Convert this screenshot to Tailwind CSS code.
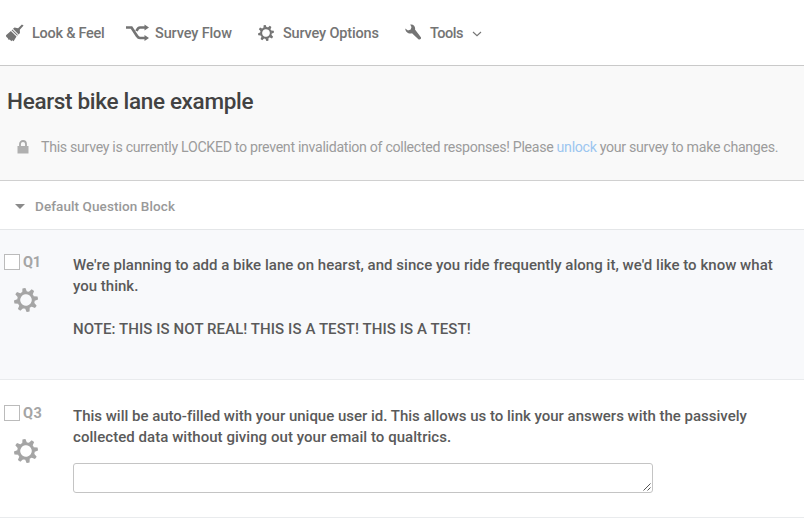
<!DOCTYPE html>
<html lang="en">
<head>
<meta charset="utf-8">
<title>Survey editor</title>
<script src="https://cdn.jsdelivr.net/npm/@tailwindcss/browser@4"></script>
</head>
<body class="w-[804px] h-[520px] overflow-hidden bg-white font-['Roboto','Liberation_Sans',sans-serif] whitespace-nowrap">
<svg class="hidden">
  <symbol id="gear" viewBox="-12 -12 24 24">
    <g transform="rotate(-10)">
      <circle r="7.300" fill="none" stroke="currentColor" stroke-width="3"/>
      <g fill="currentColor">
        <path id="pair" d="M-2.400-8L-1.500-12H1.500L2.400-8zM-2.400 8L-1.500 12H1.500L2.400 8z"/>
        <use href="#pair" transform="rotate(45)"/><use href="#pair" transform="rotate(90)"/><use href="#pair" transform="rotate(135)"/>
      </g>
    </g>
  </symbol>
</svg>
<nav class="flex h-[66px] items-center border-b border-[#c9c9c9] pl-[6px] text-[14.5px] font-medium text-[#747474]">
  <div class="flex w-[120px] items-center">
    <svg class="mr-[8px] h-[18px] w-[18px]" viewBox="0 0 18 18" fill="currentColor"><path d="M15.900.4l1.700 1.100-3.800 4.300.2 3.200-1.400 1.400L7 4.800l1.500-1.200 3.600.7z"/><path d="M6.300 5.500l5.600 5.600-.7.700-5.600-5.600z"/><path d="M4.900 6.900l5.600 5.600-2.900 4.700-1.400-.9-.8.900-1.700-1.700-.9.500-1.200-2L.2 12.800 0 11.300z"/></svg>
    <span class="pt-[2px] tracking-[-0.26px]">Look &amp; Feel</span>
  </div>
  <div class="flex w-[132px] items-center">
    <svg class="mr-[6px] h-[18px] w-[23px]" viewBox="0 0 23 18"><path d="M0 3.500H5.500L11 12Q12.300 14 14 14H19M10.500 7Q12 3.500 14 3.500H19" fill="none" stroke="currentColor" stroke-width="2.700"/><path d="M18.500.5l4.500 3-4.500 3zM18.500 11l4.500 3-4.500 3z" fill="currentColor"/></svg>
    <span class="pt-[2px] tracking-[-0.13px]">Survey Flow</span>
  </div>
  <div class="flex w-[146px] items-center">
    <svg class="mr-[9px] h-[16px] w-[16px]"><use href="#gear"/></svg>
    <span class="pt-[2px] tracking-[-0.16px]">Survey Options</span>
  </div>
  <div class="flex items-center">
    <svg class="mr-[9px] ml-px h-[17px] w-[16px]" viewBox="0 0 16 17" fill="currentColor"><path d="M5.200.6C8.300-.2 10.700 2.400 10 5.600l5.700 7.300c.5.700.4 1.600-.1 2.200-.6.600-1.600.7-2.200.1L7 9.300C3.500 10.300.2 7.700.3 4.600L3 6.400 5.700 5.600 6.500 3.100z"/></svg>
    <span class="pt-[2px] tracking-[-0.5px]">Tools</span>
    <svg class="ml-[9px] mt-[3px] h-[6px] w-[10px]" viewBox="0 0 10 6"><path d="M1 1l4 3.700L9 1" fill="none" stroke="currentColor" stroke-width="1.100"/></svg>
  </div>
</nav>
<header class="h-[115px] border-b border-[#d0d0d0] bg-[#f9f9f9] pt-[20px]">
  <h1 class="pl-[7px] text-[22.5px] font-medium leading-[30px] tracking-[-0.32px] text-[#424242]">Hearst bike lane example</h1>
  <div class="mt-[22px] flex h-[20px] items-center pl-[17px] text-[14.2px] tracking-[-0.31px] text-[#9c9c9c]">
    <svg class="mr-[12px] mb-[2px] h-[14px] w-[12px] shrink-0" viewBox="0 0 12 14"><path d="M3 7V4a3 3 0 0 1 6 0V7" fill="none" stroke="#a8a8a8" stroke-width="1.800"/><path d="M.5 6h11v7.500H.5z" fill="#b0b0b0"/></svg>
    <p>This survey is currently LOCKED to prevent invalidation of collected responses! Please <a class="text-[#9cc6f0]">unlock</a> your survey to make changes.</p>
  </div>
</header>
<div class="flex h-[49px] items-center border-b border-[#e4e6e8] pl-[15px] pt-[2px] text-[13.5px] font-medium tracking-[0.09px] text-[#999]">
  <svg class="mr-[10px] h-[5px] w-[10px]" viewBox="0 0 10 5"><path d="M0 0H10L5 5z" fill="#8b8b8b"/></svg>
  <span>Default Question Block</span>
</div>
<section class="flex h-[150px] border-b border-[#e9ebed] bg-[#f8f9fb] pt-[24px]">
  <div class="w-[73px] pl-[4px]">
    <div class="flex h-[16px] items-center text-[14.5px] font-bold text-[#a5a5a5]"><span class="mr-[3px] h-[16px] w-[16px] border border-[#bbb] bg-white"></span><span class="pt-px tracking-[-0.3px]">Q1</span></div>
    <svg class="ml-[10px] mt-[18px] h-[24px] w-[24px] text-[#a5a5a5]"><use href="#gear"/></svg>
  </div>
  <div class="pt-px text-[15px] font-medium leading-[21px] text-[#5a5a5a]">
    <p class="tracking-[0.03px]">We're planning to add a bike lane on hearst, and since you ride frequently along it, we'd like to know what</p>
    <p>you think.</p>
    <p class="mt-[22px] tracking-[0.08px]">NOTE: THIS IS NOT REAL! THIS IS A TEST! THIS IS A TEST!</p>
  </div>
</section>
<section class="flex h-[138px] border-b border-[#e9ebed] bg-white pt-[25px]">
  <div class="w-[73px] pl-[4px]">
    <div class="flex h-[16px] items-center text-[14.5px] font-bold text-[#a5a5a5]"><span class="mr-[3px] h-[16px] w-[16px] border border-[#bbb] bg-white"></span><span class="pt-px tracking-[0.6px]">Q3</span></div>
    <svg class="ml-[10px] mt-[18px] h-[24px] w-[24px] text-[#a5a5a5]"><use href="#gear"/></svg>
  </div>
  <div class="pt-px text-[15px] font-medium leading-[21px] text-[#5a5a5a]">
    <p class="tracking-[-0.01px]">This will be auto-filled with your unique user id. This allows us to link your answers with the passively</p>
    <p class="tracking-[0.05px]">collected data without giving out your email to qualtrics.</p>
    <div class="mt-[15px] flex h-[30px] w-[580px] items-end justify-end rounded-[3px] border border-[#c4c4c4] bg-white">
      <svg class="mb-px mr-px h-[8px] w-[8px]" viewBox="0 0 8 8"><path d="M.5 7.500l7-7M4.500 7.500l3-3" stroke="#555"/></svg>
    </div>
  </div>
</section>
</body>
</html>
